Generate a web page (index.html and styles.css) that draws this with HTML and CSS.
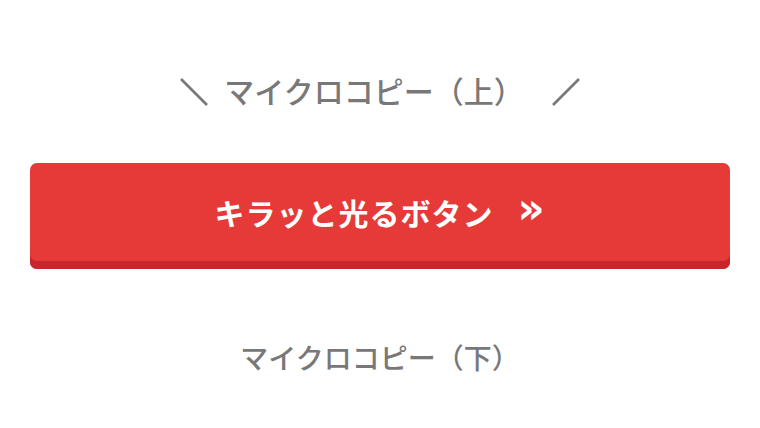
FILE: index.html
```html
<!DOCTYPE html>
<html lang="ja">
<head>
<meta charset="utf-8">
<title>マイクロコピー</title>
<link rel="stylesheet" href="styles.css">
</head>
<body>
<main class="cta">
  <p class="cta__copy cta__copy--top">
    <svg class="cta__slash cta__slash--left" viewBox="0 0 28 28" aria-hidden="true"><line x1="1" y1="1" x2="27" y2="27"/></svg>
    <span class="cta__copy-text">マイクロコピー（上）</span>
    <svg class="cta__slash cta__slash--right" viewBox="0 0 28 28" aria-hidden="true"><line x1="1" y1="27" x2="27" y2="1"/></svg>
  </p>
  <a class="cta__button" href="#">
    <span class="cta__label">キラッと光るボタン</span>
    <span class="cta__arrow">»</span>
  </a>
  <p class="cta__copy cta__copy--bottom">マイクロコピー（下）</p>
</main>
</body>
</html>
```
FILE: styles.css
```css
html, body {
  margin: 0;
  padding: 0;
  background: #ffffff;
}

body {
  font-family: "Noto Sans CJK JP", "Noto Sans", sans-serif;
  width: 760px;
  height: 428px;
  overflow: hidden;
}

.cta {
  display: flex;
  flex-direction: column;
  align-items: center;
  padding: 70px 30px 0;
}

.cta__copy {
  margin: 0;
  color: #787878;
  font-size: 28px;
  line-height: 40px;
  font-weight: 500;
}

.cta__copy--top {
  display: flex;
  align-items: center;
  font-size: 30px;
  margin-bottom: 53px;
}

.cta__slash {
  width: 28px;
  height: 28px;
  stroke: #787878;
  stroke-width: 2.6;
  stroke-linecap: butt;
  fill: none;
  margin-top: 4px;
}

.cta__slash--left {
  margin-right: 16px;
}

.cta__slash--right {
  margin-left: 28px;
}

.cta__copy--bottom {
  margin-top: 68px;
}

.cta__button {
  box-sizing: border-box;
  width: 700px;
  height: 106px;
  display: flex;
  align-items: center;
  justify-content: center;
  gap: 24px;
  background: #e53a37;
  border-radius: 7px;
  box-shadow: inset 0 -8px 0 #c8262a;
  padding-bottom: 8px;
  color: #ffffff;
  text-decoration: none;
  font-weight: 700;
  font-size: 30px;
  letter-spacing: 1px;
}

.cta__arrow {
  font-family: "DejaVu Sans", sans-serif;
  font-size: 42px;
  font-weight: 700;
  line-height: 1;
  margin-top: -6px;
}
```
